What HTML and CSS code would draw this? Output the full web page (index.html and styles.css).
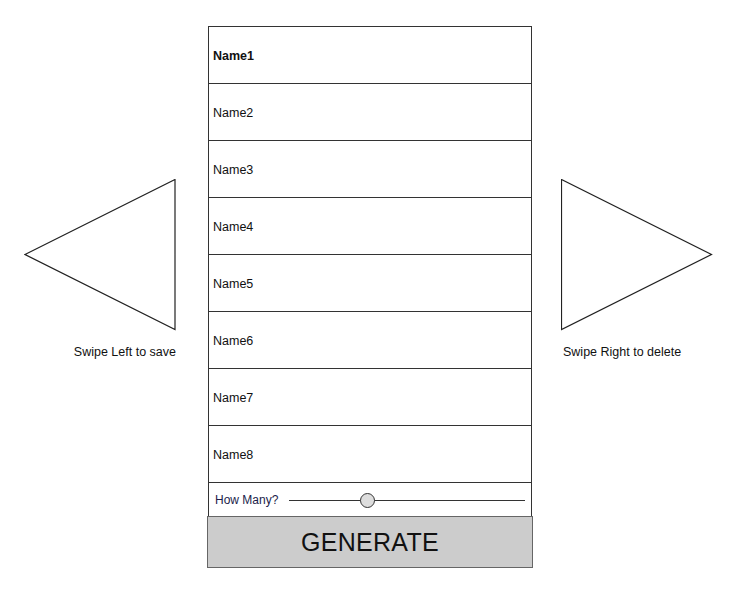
FILE: index.html
```html
<!DOCTYPE html>
<html lang="en">
<head>
  <meta charset="UTF-8" />
  <meta name="viewport" content="width=device-width, initial-scale=1.0"/>
  <title>Name Generator</title>
  <link rel="stylesheet" href="styles.css">
</head>
<body>

  <div class="page">

    <div class="side side-left">
      <svg class="arrow" width="152" height="152" viewBox="0 0 152 152">
        <polygon points="1,75.5 151,0.5 151,150.5" fill="#fff" stroke="#222" stroke-width="1.2"/>
      </svg>
      <p class="caption">Swipe Left to save</p>
    </div>

    <div class="phone">
      <div class="names">
        <div class="name-row first">Name1</div>
        <div class="name-row">Name2</div>
        <div class="name-row">Name3</div>
        <div class="name-row">Name4</div>
        <div class="name-row">Name5</div>
        <div class="name-row">Name6</div>
        <div class="name-row">Name7</div>
        <div class="name-row">Name8</div>
      </div>

      <div class="slider-row">
        <span class="slider-label">How Many?</span>
        <div class="slider">
          <div class="slider-track"></div>
          <div class="slider-knob"></div>
        </div>
      </div>

      <button class="generate">GENERATE</button>
    </div>

    <div class="side side-right">
      <svg class="arrow" width="152" height="152" viewBox="0 0 152 152">
        <polygon points="0.5,0.5 150.5,75.5 0.5,150.5" fill="#fff" stroke="#222" stroke-width="1.2"/>
      </svg>
      <p class="caption">Swipe Right to delete</p>
    </div>

  </div>

</body>
</html>
```

FILE: styles.css
```css
* { margin: 0; padding: 0; box-sizing: border-box; }

body {
  font-family: 'Liberation Sans', Arial, sans-serif;
  background-color: #fff;
  color: #111;
  width: 736px;
  height: 592px;
  overflow: hidden;
}

.page {
  display: flex;
  padding-top: 26px;
}

.side {
  display: flex;
  flex-direction: column;
  padding-top: 153px;
}

.side-left {
  width: 207px;
  padding-left: 24px;
  align-items: flex-start;
}

.side-right {
  width: 203px;
  padding-left: 28px;
  align-items: flex-start;
}

.arrow {
  display: block;
}

.caption {
  font-size: 12.5px;
  margin-top: 14px;
}

.side-left .caption {
  align-self: stretch;
  text-align: right;
  padding-right: 31px;
}

.side-right .caption {
  padding-left: 2px;
}

.phone {
  width: 326px;
  display: flex;
  flex-direction: column;
}

.names {
  margin: 0 1px;
  border: 1px solid #333;
  border-bottom: none;
}

.name-row {
  height: 57px;
  display: flex;
  align-items: center;
  padding-left: 4px;
  padding-top: 2px;
  font-size: 12.5px;
  border-bottom: 1px solid #333;
}

.name-row.first {
  font-weight: bold;
}

.slider-row {
  margin: 0 1px;
  height: 33px;
  border-left: 1px solid #333;
  border-right: 1px solid #333;
  display: flex;
  align-items: center;
  padding-left: 6px;
  padding-right: 6px;
}

.slider-label {
  font-size: 12px;
  color: #1c1c4a;
  width: 74px;
}

.slider {
  flex: 1;
  position: relative;
  height: 16px;
}

.slider-track {
  position: absolute;
  top: 8px;
  left: 0;
  right: 0;
  height: 1px;
  background-color: #333;
}

.slider-knob {
  position: absolute;
  top: 1px;
  left: 71px;
  width: 15px;
  height: 15px;
  border-radius: 50%;
  background-color: #ddd;
  border: 1px solid #333;
}

.generate {
  height: 52px;
  background-color: #ccc;
  border: 1px solid #666;
  font-family: 'Liberation Sans', Arial, sans-serif;
  font-size: 25px;
  color: #111;
  letter-spacing: 0.3px;
}
```
